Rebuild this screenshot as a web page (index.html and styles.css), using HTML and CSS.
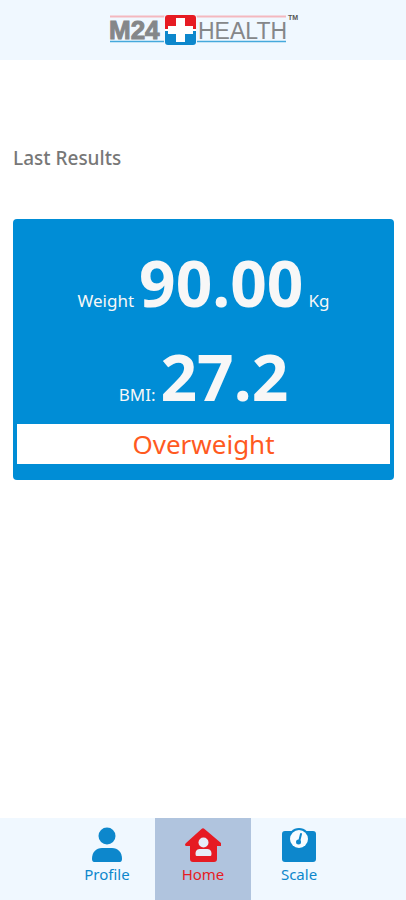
FILE: index.html
```html
<!DOCTYPE html>
<html lang="en">
<head>
<meta charset="utf-8">
<meta name="viewport" content="width=device-width, initial-scale=1">
<title>M24 Health</title>
<link rel="stylesheet" href="styles.css">
</head>
<body>
<header class="header">
  <svg class="logo" viewBox="0 0 190 36" role="img" aria-label="M24 Health">
    <path d="M2 2.500H178" stroke="#f4b8bf" stroke-width="2"/>
    <path d="M2 27.500H178" stroke="#45a9dc" stroke-width="1.500"/>
    <text class="logo-bold" x="1" y="25">M24</text>
    <rect class="logo-halo" x="56" y="0" width="33" height="33" rx="4"/>
    <path d="M60 1h25a3 3 0 0 1 3 3v12H57V4a3 3 0 0 1 3-3z" fill="#e61b23"/>
    <path d="M57 16h31v12a3 3 0 0 1-3 3H60a3 3 0 0 1-3-3z" fill="#0d87cc"/>
    <path d="M57 15h31v2H57zM68 4h9v8h8v8h-8v8h-9v-8h-8v-8h8z" fill="#fff"/>
    <text class="logo-light" x="90" y="25">HEALTH</text>
    <text class="logo-mark" x="180" y="6">TM</text>
  </svg>
</header>
<main class="main">
  <h1 class="title">Last Results</h1>
  <section class="card">
    <p class="reading"><span>Weight</span><strong>90.00</strong><span>Kg</span></p>
    <p class="reading"><span>BMI:</span><strong>27.2</strong></p>
    <p class="status">Overweight</p>
  </section>
</main>
<nav class="nav">
  <a class="tab" href="#profile">
    <svg class="icon" viewBox="0 0 36 36"><circle cx="18" cy="9" r="8.500" fill="currentColor"/><path d="M3 32c0-7 4-11 10-11h10c6 0 10 4 10 11 0 2-1 3-2 3H5c-1 0-2-1-2-3z" fill="currentColor"/></svg>
    <span>Profile</span>
  </a>
  <a class="tab tab-active" href="#home" aria-current="page">
    <svg class="icon" viewBox="0 0 36 36"><path d="M16.500 2q1.500-1.500 3 0L36 16q2 3-1 3h-3v13q0 3-3 3H8q-3 0-3-3V19H1q-2-1 0-3z" fill="currentColor"/><circle cx="18.500" cy="15.500" r="5" fill="#e6edf7"/><path d="M10.500 27c0-4 2-5 5-5h6c3 0 5 1 5 5q0 2-1 2h-14q-1 0-1-2z" fill="#e6edf7"/></svg>
    <span>Home</span>
  </a>
  <a class="tab" href="#scale">
    <svg class="icon" viewBox="0 0 36 36"><rect x="1" y="4" width="34" height="31" rx="3" fill="currentColor"/><circle cx="18" cy="12" r="11" fill="currentColor"/><circle cx="18" cy="12" r="9" fill="#f8fcff"/><path d="m20 7-2 8" stroke="currentColor" stroke-width="2" stroke-linecap="round"/><circle cx="17.500" cy="15" r="2.500" fill="currentColor"/></svg>
    <span>Scale</span>
  </a>
</nav>
</body>
</html>
```
FILE: styles.css
```css
* { box-sizing: border-box; }
body {
  margin: 0;
  min-height: 100vh;
  display: flex;
  flex-direction: column;
  background: #fff;
  font-family: "Noto Sans", sans-serif;
}
.header {
  display: flex;
  justify-content: center;
  padding: 14px 0 10px;
  background: #f0f8ff;
}
.logo {
  width: 190px;
  height: 36px;
  overflow: visible;
}
.logo text { font-family: "Liberation Sans", Arial, sans-serif; fill: #858789; }
.logo .logo-bold { font-size: 26px; font-weight: 700; stroke: #858789; stroke-width: 1px; }
.logo .logo-light { font-size: 23px; }
.logo .logo-mark { font-size: 7px; font-weight: 700; fill: #555; }
.logo-halo { fill: #f0f8ff; }
.main { flex: 1; padding: 86px 12px 24px 13px; }
.title {
  margin: 0 0 48px;
  color: #777;
  font-size: 19px;
  line-height: 25px;
  font-weight: 500;
}
.card {
  padding: 17px 4px 16px;
  border-radius: 4px;
  background: #008dd6;
  color: #f7f7f7;
}
.reading {
  display: flex;
  justify-content: center;
  align-items: baseline;
  gap: 5px;
  margin: 0;
  font-size: 17px;
  line-height: 24px;
}
.reading strong { font-size: 64px; line-height: 94px; font-weight: 700; }
.status {
  margin: 0;
  background: #fff;
  color: #ff5a1f;
  font-size: 26px;
  line-height: 40px;
  text-align: center;
}
.nav {
  display: flex;
  justify-content: center;
  background: #f0f8ff;
}
.tab {
  display: flex;
  flex-direction: column;
  align-items: center;
  width: 96px;
  padding: 9px 0 15px;
  color: #0d87cc;
  font-size: 15px;
  line-height: 22px;
  text-decoration: none;
}
.tab-active { background: #b0c4de; color: #e61b23; }
.icon { width: 36px; height: 36px; }
```
